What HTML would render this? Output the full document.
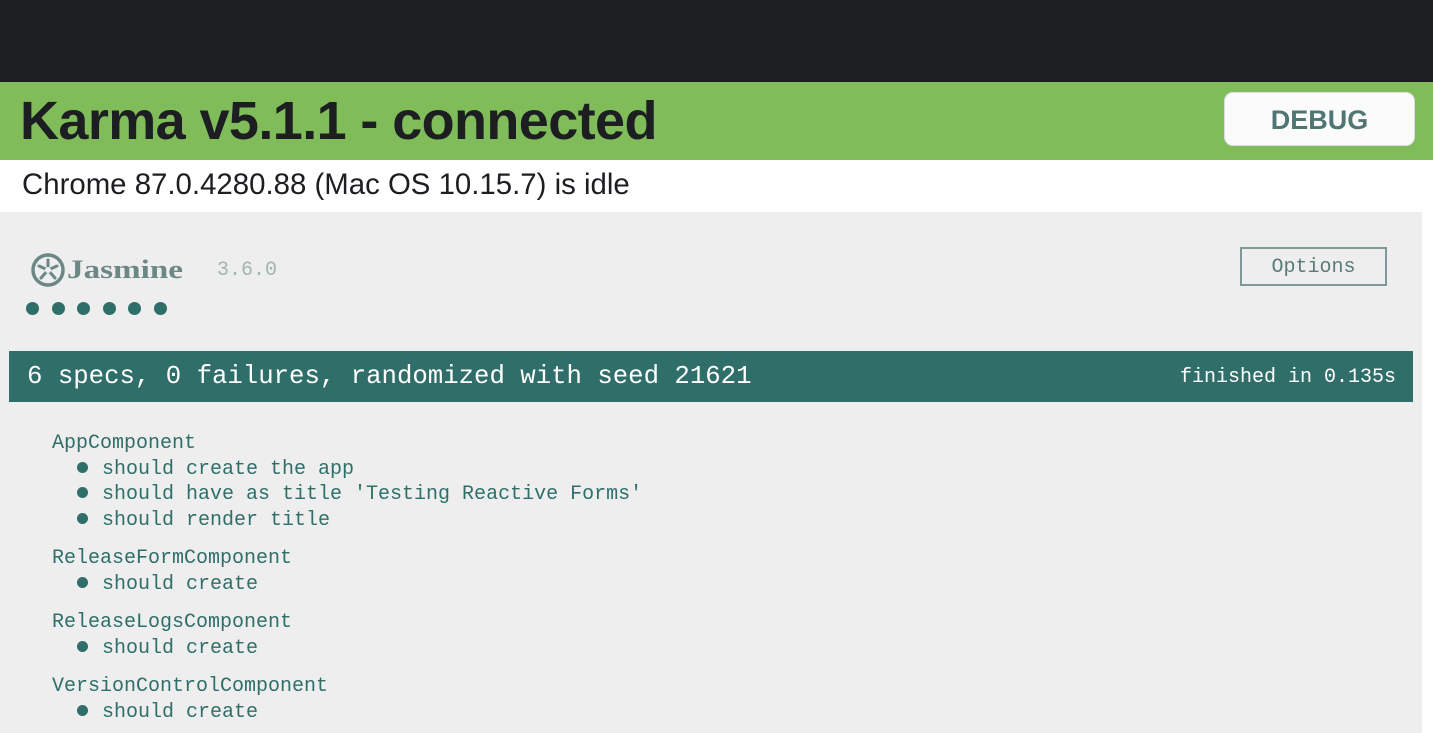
<!DOCTYPE html>
<html><head><meta charset="utf-8"><style>
*{margin:0;padding:0;box-sizing:border-box}
body{width:1433px;height:733px;overflow:hidden;background:#fff;position:relative;font-family:"Liberation Sans",sans-serif}
.top{position:absolute;left:0;top:0;width:1433px;height:82px;background:#1d1e22}
.green{position:absolute;left:0;top:82px;width:1433px;height:78px;background:#80bd5a}
h1{position:absolute;left:20px;top:91px;font-size:54px;line-height:60px;font-weight:bold;color:#1c1e22;letter-spacing:-0.6px}
.debug{position:absolute;left:1224px;top:92px;width:191px;height:54px;background:#fbfbfb;border:1px solid #ddd;border-radius:9px;color:#4f7672;font-weight:bold;font-size:27px;text-align:center;line-height:54px}
.idle{position:absolute;left:22px;top:168px;font-size:29.4px;line-height:34px;color:#1c1e22}
.panel{position:absolute;left:0;top:212px;width:1422px;height:521px;background:#eeeeee}
.mono{font-family:"Liberation Mono","DejaVu Sans Mono",monospace}
.ver{position:absolute;left:217px;top:259px;font-size:20px;color:#a4b4b3}
.opt{position:absolute;left:1240px;top:247px;width:147px;height:39px;border:2px solid #7d9896;color:#5b7b79;font-size:20px;text-align:center;line-height:37px}
.dots{position:absolute;left:26px;top:302px}
.dots span{display:inline-block;width:13px;height:13px;border-radius:50%;background:#2f6f6a;margin-right:12.5px}
.bar{position:absolute;left:9px;top:351px;width:1404px;height:51px;background:#2f6e69;color:#fff}
.bar .l{position:absolute;left:18px;top:11px;font-size:25.7px}
.bar .r{position:absolute;right:17px;top:15px;font-size:20px}
.list{position:absolute;left:52px;top:431px;font-size:20px;color:#2f6f6a;line-height:25.5px}
.list .s{padding-left:25px}
.list .s::before{content:"";display:inline-block;width:11px;height:11px;border-radius:50%;background:#2f6f6a;margin-right:14px;vertical-align:1px}
.list .g{margin-top:13px}
</style></head><body>
<div class="top"></div>
<div class="green"></div>
<h1>Karma v5.1.1 - connected</h1>
<div class="debug">DEBUG</div>
<div class="idle">Chrome 87.0.4280.88 (Mac OS 10.15.7) is idle</div>
<div class="panel"></div>
<svg style="position:absolute;left:30px;top:252px" width="160" height="36" viewBox="0 0 160 36">
<circle cx="18" cy="18" r="15" fill="none" stroke="#6c8886" stroke-width="3.5"/>
<g stroke="#6c8886" stroke-width="3" stroke-linecap="round">
<line x1="18" y1="18" x2="18" y2="8"/><line x1="18" y1="18" x2="27" y2="14"/><line x1="18" y1="18" x2="25" y2="26"/><line x1="18" y1="18" x2="11" y2="26"/><line x1="18" y1="18" x2="9" y2="14"/></g>
<circle cx="18" cy="18" r="3" fill="#eee"/>
<text x="37" y="26" font-family="Liberation Serif,serif" font-size="26" font-weight="bold" fill="#6c8886" textLength="116" lengthAdjust="spacingAndGlyphs">Jasmine</text>
</svg>
<div class="ver mono">3.6.0</div>
<div class="opt mono">Options</div>
<div class="dots"><span></span><span></span><span></span><span></span><span></span><span></span></div>
<div class="bar mono"><div class="l">6 specs, 0 failures, randomized with seed 21621</div><div class="r">finished in 0.135s</div></div>
<div class="list mono">
<div>AppComponent</div>
<div class="s">should create the app</div>
<div class="s">should have as title 'Testing Reactive Forms'</div>
<div class="s">should render title</div>
<div class="g">ReleaseFormComponent</div>
<div class="s">should create</div>
<div class="g">ReleaseLogsComponent</div>
<div class="s">should create</div>
<div class="g">VersionControlComponent</div>
<div class="s">should create</div>
</div>
</body></html>
